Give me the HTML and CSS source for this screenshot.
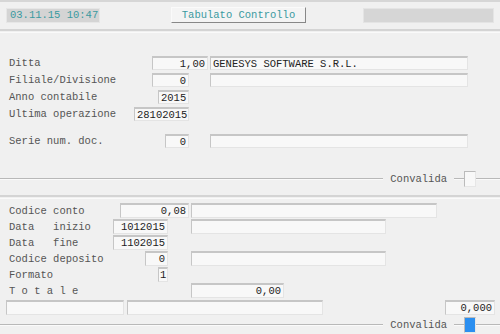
FILE: index.html
```html
<!DOCTYPE html>
<html lang="it">
<head>
    <meta charset="UTF-8">
    <title>Tabulato Controllo</title>
    <link rel="stylesheet" href="styles.css">
</head>
<body>
    <div class="topbar">
        <div class="clock">03.11.15 10:47</div>
        <div class="titolo">Tabulato Controllo</div>
        <div class="stato"></div>
    </div>
    <div class="sep"></div>

    <section class="sez1">
        <div class="riga">
            <div class="key k-ditta"><span>Ditta</span><span class="campo num w56">1,00</span></div>
            <span class="campo testo w258 m2">GENESYS SOFTWARE S.R.L.</span>
        </div>
        <div class="riga">
            <div class="key"><span>Filiale/Divisione</span><span class="campo num w37">0</span></div>
            <span class="campo testo w258 m21"></span>
        </div>
        <div class="riga">
            <div class="key"><span>Anno contabile</span><span class="campo num w30">2015</span></div>
        </div>
        <div class="riga">
            <div class="key"><span>Ultima operazione</span><span class="campo num w55">28102015</span></div>
        </div>
        <div class="riga serie">
            <div class="key"><span>Serie num. doc.</span><span class="campo num w24">0</span></div>
            <span class="campo testo w258 m21"></span>
        </div>
    </section>

    <div class="convalida c1">
        <div class="linea"></div>
        <span class="conv-lab">Convalida</span>
        <div class="linea corta"></div>
        <div class="check"></div>
        <div class="linea coda"></div>
    </div>
    <div class="sep sep2"></div>

    <section class="sez2">
        <div class="riga">
            <div class="key"><span>Codice conto</span><span class="campo num w69">0,08</span></div>
            <span class="campo testo w246 m2"></span>
        </div>
        <div class="riga">
            <div class="key k2"><span>Data&nbsp;&nbsp;&nbsp;inizio</span><span class="campo num w55">1012015</span></div>
            <span class="campo testo w195 m23"></span>
        </div>
        <div class="riga">
            <div class="key k2"><span>Data&nbsp;&nbsp;&nbsp;fine</span><span class="campo num w55">1102015</span></div>
        </div>
        <div class="riga">
            <div class="key k2"><span>Codice deposito</span><span class="campo num w23">0</span></div>
            <span class="campo testo w195 m23"></span>
        </div>
        <div class="riga">
            <div class="key k2"><span>Formato</span><span class="campo num w10">1</span></div>
        </div>
        <div class="riga">
            <div class="key k2"><span class="spaziato">Totale</span></div>
            <span class="campo num w93 m23">0,00</span>
        </div>
        <div class="riga fondo">
            <span class="campo testo w118"></span>
            <span class="campo testo w196 m3"></span>
            <span class="campo num w50 dx">0,000</span>
        </div>
    </section>

    <div class="convalida c2">
        <div class="linea"></div>
        <span class="conv-lab">Convalida</span>
        <div class="linea corta"></div>
        <div class="check attivo"></div>
        <div class="linea coda"></div>
    </div>
</body>
</html>
```

FILE: styles.css
```css
body {
    margin: 0;
    background-color: #f0f0f0;
    font-family: "Liberation Mono", "DejaVu Sans Mono", monospace;
    font-size: 10.5px;
    color: #555;
    border-top: 2px solid #d6d6d6;
    height: 332px;
    overflow: hidden;
}

.topbar {
    display: flex;
    align-items: flex-start;
    height: 21px;
    padding: 6px 0 0 6px;
}

.clock {
    width: 89px;
    height: 13px;
    line-height: 13px;
    padding-left: 3px;
    background-color: #d4d4d4;
    border: 1px solid #e6e6e6;
    color: #3a9aa0;
}

.titolo {
    width: 133px;
    height: 14px;
    line-height: 14px;
    margin-left: 71px;
    margin-top: -1px;
    text-align: center;
    background-color: #f4f4f4;
    border: 1px solid;
    border-color: #fafafa #888 #888 #fafafa;
    color: #3a9aa0;
}

.stato {
    width: 129px;
    height: 13px;
    margin-left: 57px;
    background-color: #d6d6d6;
    border: 1px solid #e4e4e4;
}

.sep {
    height: 1px;
    border-top: 2px solid #d4d4d4;
    border-bottom: 1px solid #fafafa;
}

.sez1 {
    padding: 23px 0 0 9px;
}

.riga {
    display: flex;
    align-items: center;
    height: 14px;
    margin-bottom: 3px;
}

.riga.serie {
    margin-top: 13px;
}

.key {
    width: 180px;
    display: flex;
    justify-content: space-between;
    align-items: center;
}

.k-ditta {
    width: 199px;
}

.k2 {
    width: 159px;
}

.campo {
    display: block;
    box-sizing: border-box;
    height: 14px;
    line-height: 12px;
    padding: 0 2px;
    background-color: #f8f8f8;
    border-style: solid;
    border-width: 2px 1px 1px 1px;
    border-color: #c6c6c6 #e4e4e4 #e4e4e4 #c6c6c6;
    color: #222;
    white-space: pre;
}

.num {
    text-align: right;
}

.testo {
    text-align: left;
}

.w10 { width: 10px; padding: 0 1px; }
.w23 { width: 23px; }
.w24 { width: 24px; }
.w30 { width: 31px; }
.w37 { width: 37px; }
.w50 { width: 50px; }
.w55 { width: 55px; }
.w56 { width: 56px; }
.w69 { width: 69px; }
.w93 { width: 93px; }
.w118 { width: 118px; }
.w195 { width: 195px; }
.w196 { width: 196px; }
.w246 { width: 246px; }
.w258 { width: 258px; }

.m2 { margin-left: 2px; }
.m3 { margin-left: 3px; }
.m21 { margin-left: 21px; }
.m23 { margin-left: 23px; }

.dx {
    margin-left: auto;
    margin-right: 5px;
}

.spaziato {
    letter-spacing: 6.3px;
}

.convalida {
    display: flex;
    align-items: center;
    height: 16px;
}

.c1 {
    margin-top: 23px;
}

.linea {
    flex: 1;
    height: 0;
    border-top: 1px solid #b8b8b8;
    border-bottom: 1px solid #fafafa;
}

.linea.corta {
    flex: 0 0 10px;
    margin-left: 7px;
}

.linea.coda {
    flex: 0 0 24px;
}

.conv-lab {
    margin-left: 7px;
    color: #555;
}

.check {
    width: 10px;
    height: 14px;
    background-color: #f8f8f8;
    border: 1px solid;
    border-color: #bbb #e6e6e6 #e6e6e6 #bbb;
}

.check.attivo {
    background-color: #2b8ff0;
    border-color: #bbb #e6e6e6 #e6e6e6 #bbb;
}

.sep2 {
    margin-top: 8px;
}

.sez2 {
    padding: 4px 0 0 9px;
}

.sez2 .riga {
    height: 15px;
    margin-bottom: 1px;
}

.sez2 .campo {
    height: 15px;
    line-height: 13px;
}

.riga.fondo {
    margin-left: -3px;
    margin-top: 2px;
}

.c2 {
    margin-top: 2px;
}
```
